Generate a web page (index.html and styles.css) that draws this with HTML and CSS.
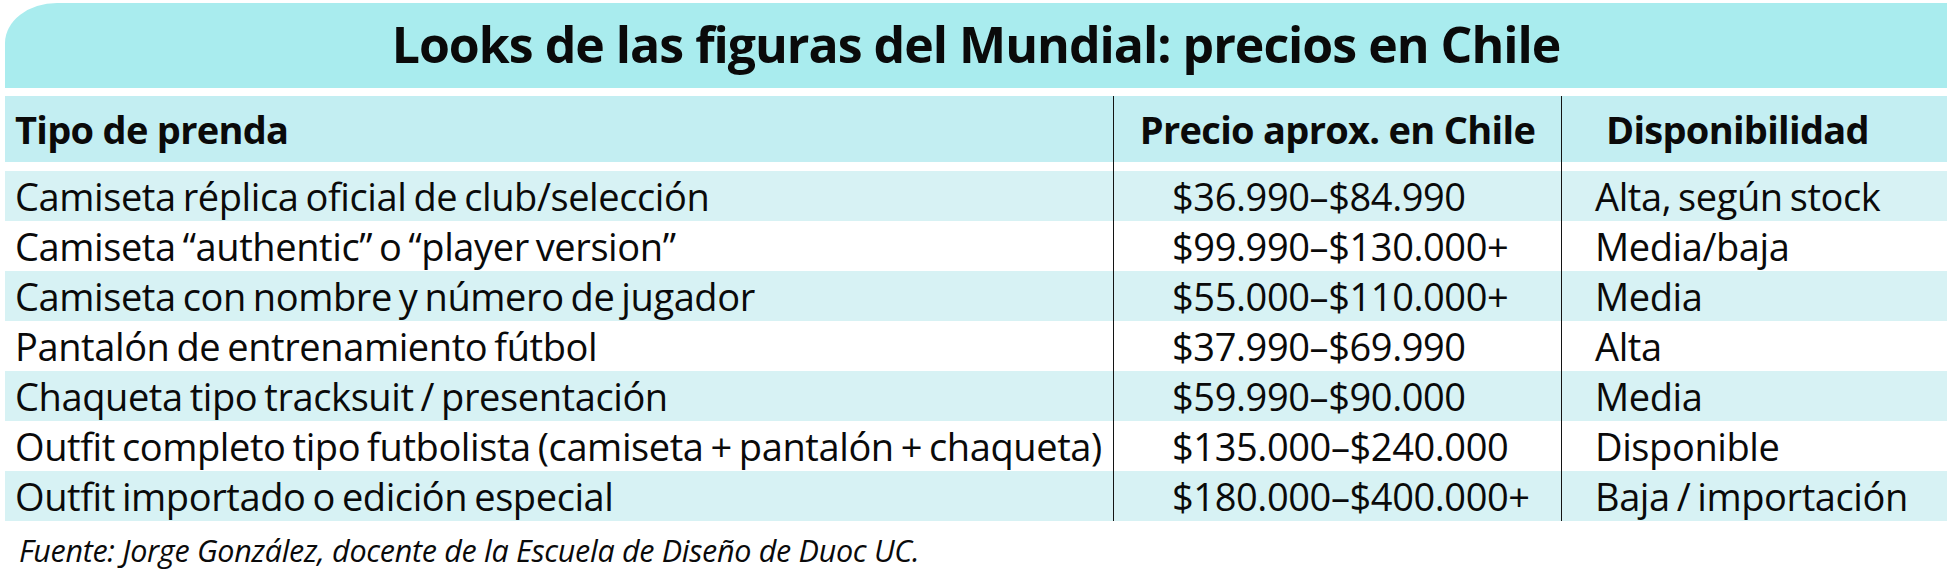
FILE: index.html
```html
<!DOCTYPE html>
<html lang="es">
<head>
<meta charset="utf-8">
<title>Looks de las figuras del Mundial: precios en Chile</title>
<link rel="stylesheet" href="styles.css">
</head>
<body>
<div class="page">
  <div class="title-band">
    <h1 class="title">Looks de las figuras del Mundial: precios en Chile</h1>
  </div>
  <div class="table">
    <div class="row head">
      <div class="cell c1">Tipo de prenda</div>
      <div class="cell c2">Precio aprox. en Chile</div>
      <div class="cell c3">Disponibilidad</div>
    </div>
    <div class="row spacer">
      <div class="cell c1"></div>
      <div class="cell c2"></div>
      <div class="cell c3"></div>
    </div>
    <div class="row shade">
      <div class="cell c1">Camiseta réplica oficial de club/selección</div>
      <div class="cell c2">$36.990–$84.990</div>
      <div class="cell c3">Alta, según stock</div>
    </div>
    <div class="row">
      <div class="cell c1">Camiseta “authentic” o “player version”</div>
      <div class="cell c2">$99.990–$130.000+</div>
      <div class="cell c3">Media/baja</div>
    </div>
    <div class="row shade">
      <div class="cell c1">Camiseta con nombre y número de jugador</div>
      <div class="cell c2">$55.000–$110.000+</div>
      <div class="cell c3">Media</div>
    </div>
    <div class="row">
      <div class="cell c1">Pantalón de entrenamiento fútbol</div>
      <div class="cell c2">$37.990–$69.990</div>
      <div class="cell c3">Alta</div>
    </div>
    <div class="row shade">
      <div class="cell c1">Chaqueta tipo tracksuit / presentación</div>
      <div class="cell c2">$59.990–$90.000</div>
      <div class="cell c3">Media</div>
    </div>
    <div class="row">
      <div class="cell c1">Outfit completo tipo futbolista (camiseta + pantalón + chaqueta)</div>
      <div class="cell c2">$135.000–$240.000</div>
      <div class="cell c3">Disponible</div>
    </div>
    <div class="row shade">
      <div class="cell c1">Outfit importado o edición especial</div>
      <div class="cell c2">$180.000–$400.000+</div>
      <div class="cell c3">Baja / importación</div>
    </div>
  </div>
  <p class="source">Fuente: Jorge González, docente de la Escuela de Diseño de Duoc UC.</p>
</div>
</body>
</html>
```
FILE: styles.css
```css
html, body {
  margin: 0;
  padding: 0;
  background: #ffffff;
}

body {
  font-family: "Open Sans", "Noto Sans", "Liberation Sans", sans-serif;
  color: #0a0a0a;
}

.page {
  width: 1942px;
  padding: 3px 0 0 5px;
}

.title-band {
  height: 85px;
  box-sizing: border-box;
  padding-bottom: 3px;
  background: #a9ecee;
  border-top-left-radius: 52px 40px;
  display: flex;
  align-items: center;
  justify-content: center;
  margin-bottom: 8px;
}

.title {
  margin: 0;
  font-size: 50px;
  line-height: 50px;
  font-weight: 700;
  letter-spacing: -1px;
}

.row {
  display: grid;
  grid-template-columns: 1108px 448px 1fr;
  height: 50px;
  font-size: 38px;
  letter-spacing: -0.4px;
  word-spacing: -2.5px;
  line-height: 46px;
}

.row.shade {
  background: #d7f2f4;
}

.row.head {
  height: 66px;
  background: #c3eef2;
  font-weight: 700;
  letter-spacing: -0.7px;
  word-spacing: 0;
}

.row.spacer {
  height: 9px;
}

.cell {
  display: flex;
  align-items: center;
  box-sizing: border-box;
  white-space: nowrap;
}

.c1 {
  padding-left: 10px;
}

.c2,
.c3 {
  border-left: 1px solid #141414;
}

.c2 {
  padding-left: 58px;
}

.c3 {
  padding-left: 33px;
}

.head .c2 {
  padding-left: 0;
  justify-content: center;
}

.head .c3 {
  padding-left: 44px;
}

.source {
  margin: 9px 0 0 14px;
  font-size: 30.5px;
  line-height: 40px;
  font-style: italic;
  letter-spacing: -0.3px;
}
```
